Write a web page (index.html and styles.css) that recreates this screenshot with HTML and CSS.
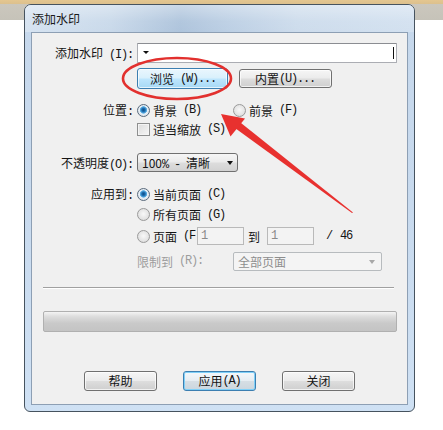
FILE: index.html
```html
<!DOCTYPE html>
<html lang="zh-CN">
<head>
<meta charset="utf-8">
<title>添加水印</title>
<link rel="stylesheet" href="styles.css">
</head>
<body>
<div class="window">
  <div class="titlebar"><span class="title">添加水印</span></div>
  <div class="content">
    <div class="row r1">
      <span class="lab">添加水印<span class="k">&nbsp;(I):</span></span>
      <div class="textbox"><span class="tri"></span><span class="caret"></span></div>
    </div>
    <div class="row r2 indent">
      <button class="btn hot browse">浏览<span class="k">&nbsp;(W)...</span></button>
      <button class="btn builtin">内置<span class="k">(U)...</span></button>
    </div>
    <div class="row r3">
      <span class="lab">位置<span class="k">:</span></span>
      <span class="opt w96"><span class="radio on"></span>背景<span class="k">&nbsp;(B)</span></span>
      <span class="opt"><span class="radio"></span>前景<span class="k">&nbsp;(F)</span></span>
    </div>
    <div class="row r4 indent">
      <span class="opt"><span class="check"></span>适当缩放<span class="k">&nbsp;(S)</span></span>
    </div>
    <div class="row r5">
      <span class="lab">不透明度<span class="k">(O):</span></span>
      <div class="combo"><span>100<span class="k">%&nbsp;-&nbsp;</span>清晰</span><span class="arrow"></span></div>
    </div>
    <div class="row r6">
      <span class="lab">应用到<span class="k">:</span></span>
      <span class="opt"><span class="radio on"></span>当前页面<span class="k">&nbsp;(C)</span></span>
    </div>
    <div class="row r7 indent">
      <span class="opt"><span class="radio"></span>所有页面<span class="k">&nbsp;(G)</span></span>
    </div>
    <div class="row r8 indent">
      <span class="opt"><span class="radio"></span>页面<span class="k">&nbsp;(F</span></span>
      <span class="numbox first">1</span>
      <span class="to">到</span>
      <span class="numbox second">1</span>
      <span class="slash k">/</span>
      <span class="total k">46</span>
    </div>
    <div class="row r9 indent">
      <span class="opt w96 dis">限制到<span class="k">&nbsp;(R):</span></span>
      <div class="combo disabled"><span>全部页面</span><span class="arrow"></span></div>
    </div>
    <div class="sep"></div>
    <div class="progress"></div>
    <div class="footer">
      <button class="btn fbtn">帮助</button>
      <button class="btn fbtn focus">应用<span class="k">(A)</span></button>
      <button class="btn fbtn">关闭</button>
    </div>
  </div>
</div>
<svg class="annot" width="443" height="430" viewBox="0 0 443 430" xmlns="http://www.w3.org/2000/svg">
  <ellipse cx="177" cy="78.5" rx="54" ry="20.5" fill="none" stroke="#e2302e" stroke-width="2.6"/>
  <polygon points="235.6,128.6 240.4,122.4 353,212.5 352,213" fill="#e8312f"/>
  <polygon points="221,114 245,118.5 230.5,136.5" fill="#e8312f"/>
</svg>
</body>
</html>
```
FILE: styles.css
```css
* { box-sizing: border-box; }
html, body { margin: 0; padding: 0; }
body {
  width: 443px;
  height: 430px;
  overflow: hidden;
  position: relative;
  font-family: "Noto Sans CJK SC", "Noto Sans", sans-serif;
  font-size: 12px;
  color: #151515;
  background: linear-gradient(180deg, #e4c690 0, #dcc08e 4px, #cbc7bd 4px, #c6c3b9 20px, #ffffff 20px);
}
.k {
  font-family: "Liberation Mono", monospace;
  font-size: 12px;
  letter-spacing: -1.2px;
}
.window {
  margin: 4px 0 0 24px;
  width: 391px;
  height: 408px;
  border: 1px solid #46535f;
  border-radius: 7px 7px 6px 6px;
  background: linear-gradient(180deg, #c6d8ec 0, #c8daee 50%, #cfe1f4 100%);
  display: flex;
  flex-direction: column;
  overflow: hidden;
}
.titlebar {
  height: 27px;
  flex-shrink: 0;
  display: flex;
  align-items: center;
  padding-left: 7px;
  background:
    linear-gradient(180deg, rgba(255,255,255,0.35) 0, rgba(255,255,255,0.05) 60%, rgba(255,255,255,0) 100%),
    linear-gradient(90deg, #d6e3f1 0%, #c9d9ea 22%, #aec4dc 40%, #bccfe4 52%, #cddcec 70%, #d3e1f0 100%);
}
.title { font-size: 12px; color: #1a1a1a; }
.content {
  margin: 0 6px 0 6px;
  width: 377px;
  height: 373px;
  border: 1px solid #8d9fb4;
  background: #f0f0f0;
  display: flex;
  flex-direction: column;
}
.row { display: flex; align-items: center; flex-shrink: 0; }
.indent { padding-left: 105px; }
.lab {
  width: 101px;
  margin-right: 4px;
  text-align: right;
  white-space: nowrap;
  flex-shrink: 0;
}
.r1 { margin-top: 10px; height: 20px; }
.r2 { margin-top: 5px; height: 21px; }
.r3 { margin-top: 12px; height: 18px; }
.r4 { height: 20px; }
.r5 { margin-top: 14px; height: 19px; }
.r6 { margin-top: 12px; height: 20px; }
.r7 { height: 21px; }
.r8 { height: 22px; }
.r9 { margin-top: 4px; height: 20px; }

.textbox {
  position: relative;
  width: 260px;
  height: 20px;
  background: #fff;
  border: 1px solid #abadb3;
  border-top-color: #8b8d92;
  border-radius: 1px;
}
.tri {
  position: absolute;
  left: 5px; top: 7px;
  width: 0; height: 0;
  border-left: 3px solid transparent;
  border-right: 3px solid transparent;
  border-top: 3px solid #111;
}
.caret {
  position: absolute;
  right: 2px; top: 3px;
  width: 1px; height: 12px;
  background: #111;
}

.btn {
  font-family: "Noto Sans CJK SC", "Noto Sans", sans-serif;
  font-size: 12px;
  color: #151515;
  padding: 0;
  height: 20px;
  border: 1px solid #707070;
  border-radius: 3px;
  background: linear-gradient(180deg, #f6f6f6 0, #ebebeb 48%, #dddddd 52%, #cfcfcf 100%);
  box-shadow: inset 0 0 0 1px rgba(255,255,255,0.7);
  display: flex;
  align-items: center;
  justify-content: center;
  line-height: 1;
}
.browse {
  width: 91px;
  height: 21px;
  justify-content: flex-start;
  padding-left: 12px;
}
.hot {
  border-color: #3c7fb1;
  background: linear-gradient(180deg, #eaf6fd 0, #d9f0fc 48%, #bee6fd 52%, #a7d9f5 100%);
}
.builtin {
  width: 93px;
  height: 19px;
  margin-left: 11px;
  justify-content: flex-start;
  padding-left: 15px;
}

.opt { display: flex; align-items: center; white-space: nowrap; }
.w96 { width: 96px; flex-shrink: 0; }
.radio {
  width: 13px; height: 13px;
  border-radius: 50%;
  border: 1px solid #9a9a9a;
  background: radial-gradient(circle at 50% 45%, #f8f8f8 0, #e4e4e4 60%, #cfcfcf 100%);
  margin-right: 3px;
  flex-shrink: 0;
}
.radio.on {
  border-color: #5a6a7c;
  background: radial-gradient(circle at 50% 45%, #0b4b83 0, #1f6fb1 22%, #67b8ea 42%, #e6eef5 48%, #d8dfe6 100%);
}
.check {
  width: 13px; height: 13px;
  border: 1px solid #8e8f8f;
  background: linear-gradient(135deg, #dcdcdc 0, #f6f6f6 100%);
  box-shadow: inset 0 0 0 1px #f4f4f4;
  margin-right: 3px;
  flex-shrink: 0;
}

.combo {
  position: relative;
  display: flex;
  align-items: center;
  width: 101px;
  height: 19px;
  padding-left: 4px;
  border: 1px solid #707070;
  border-radius: 3px;
  background: linear-gradient(180deg, #f6f6f6 0, #ebebeb 48%, #dddddd 52%, #d2d2d2 100%);
  white-space: nowrap;
}
.arrow {
  position: absolute;
  right: 4px; top: 7px;
  width: 0; height: 0;
  border-left: 3.5px solid transparent;
  border-right: 3.5px solid transparent;
  border-top: 4px solid #111;
}
.combo.disabled {
  width: 149px;
  margin-left: 0;
  border-color: #b7bbbe;
  border-radius: 2px;
  background: #f4f4f4;
  color: #8d8d8d;
}
.combo.disabled .arrow { right: 6px; border-top-color: #a8a8a8; }
.dis { color: #9d9d9d; }

.numbox {
  display: flex;
  align-items: center;
  width: 47px;
  height: 18px;
  padding-left: 3px;
  border: 1px solid #b9b9b9;
  background: #f3f3f3;
  color: #8a8a8a;
  font-family: "Liberation Mono", monospace;
  font-size: 12px;
}
.numbox.first { margin-left: 2px; }
.to { margin-left: 4px; margin-right: 7px; }
.slash { margin-left: 12px; }
.total { margin-left: 8px; }

.sep {
  margin: 16px 0 0 11px;
  width: 351px;
  height: 2px;
  border-top: 1px solid #a0a0a0;
  border-bottom: 1px solid #ffffff;
  flex-shrink: 0;
}
.progress {
  margin: 22px 0 0 11px;
  width: 354px;
  height: 21px;
  border: 1px solid #b0b0b0;
  border-radius: 2px;
  background: linear-gradient(180deg, #f4f4f4 0, #dcdcdc 25%, #c9c9c9 60%, #c4c4c4 100%);
  flex-shrink: 0;
}
.footer {
  margin-top: 39px;
  display: flex;
  justify-content: center;
  gap: 26px;
  flex-shrink: 0;
}
.fbtn { width: 73px; height: 20px; }
.focus {
  border-color: #3c7fb1;
  box-shadow: inset 0 0 0 1px #7fd0f8;
  background: linear-gradient(180deg, #f4f8fb 0, #e6edf2 48%, #d6dee4 52%, #cbd6de 100%);
}

.annot {
  position: absolute;
  left: 0; top: 0;
  pointer-events: none;
}
```
